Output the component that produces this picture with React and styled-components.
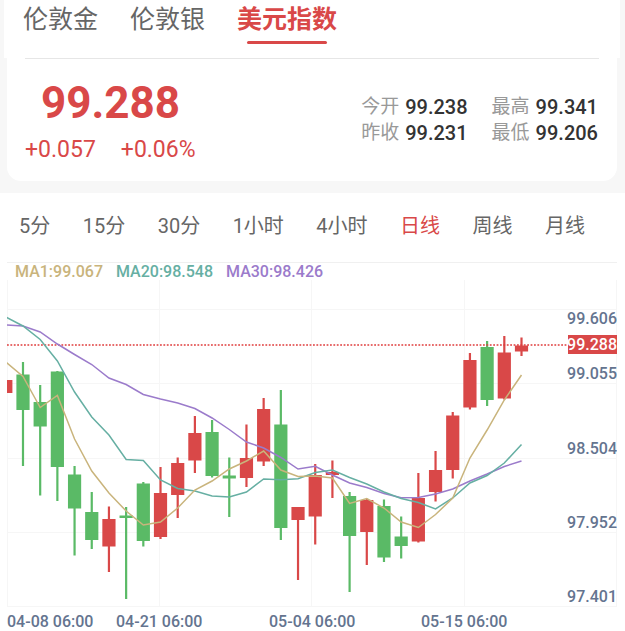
import React, { useState } from "react";

import styled, { createGlobalStyle } from "styled-components";

const symbols = ["伦敦金", "伦敦银", "美元指数"];

const periods = [
  "5分",
  "15分",
  "30分",
  "1小时",
  "4小时",
  "日线",
  "周线",
  "月线",
];

const stats = [
  { name: "今开", value: "99.238" },
  { name: "最高", value: "99.341" },
  { name: "昨收", value: "99.231" },
  { name: "最低", value: "99.206" },
];

const averages = [
  { name: "MA1:99.067", color: "#c9b47c" },
  { name: "MA20:98.548", color: "#66afa3" },
  { name: "MA30:98.426", color: "#9b7bcb" },
];

const UP = "#d94848";
const DOWN = "#5aba66";

// high, body top, body bottom, low, color (chart units)
const candles = [
  [100, 100, 113, 113, UP],
  [82, 94.5, 130, 186, DOWN],
  [105, 122, 146.5, 215.5, DOWN],
  [91, 91.5, 187, 221, DOWN],
  [186, 194.5, 228.5, 275.5, DOWN],
  [212, 232, 260, 269, DOWN],
  [226.5, 239, 266.5, 292, UP],
  [227, 235.5, 238, 319, DOWN],
  [202, 203.5, 261, 266.5, DOWN],
  [187, 213, 257, 259, UP],
  [177.5, 183, 215, 238, UP],
  [136, 153, 180.5, 193, UP],
  [140, 152, 196, 197.5, DOWN],
  [177.5, 195.5, 198.5, 237, DOWN],
  [144.5, 178, 198, 207, UP],
  [118, 129, 181.5, 186, UP],
  [110, 144.5, 248, 260, DOWN],
  [227, 227, 240, 300, UP],
  [184, 195, 236.5, 264.5, UP],
  [180.5, 192, 195, 218, UP],
  [212, 216, 256, 312, DOWN],
  [219, 220, 252, 285, UP],
  [219.5, 226, 277.5, 282, DOWN],
  [236.5, 256.5, 266, 278.5, DOWN],
  [193, 218, 261.5, 262.5, UP],
  [171, 190, 212, 221.5, UP],
  [132, 135.5, 190, 198.5, UP],
  [73, 80, 127.5, 129.5, UP],
  [61, 67, 120, 126, DOWN],
  [56, 72.5, 118.5, 119.5, UP],
  [57.5, 65.5, 71.5, 76, UP],
];

const ma1 = [
  82, 96.5, 127.5, 115.5, 159, 191, 213, 231, 245, 242, 228, 210, 201, 189, 181,
  171, 190, 196.5, 196, 198, 223.5, 218.5, 228, 242, 247.5, 234.5, 218, 178,
  150, 120, 95,
];
const ma20 = [
  37, 46, 59.5, 81, 112, 137, 155, 179.5, 180.5, 200, 208.5, 211, 216, 217, 212,
  199, 199.7, 198.7, 192.5, 190, 197.5, 204, 212, 218.5, 222.5, 229, 218, 203,
  195.5, 183, 164.5,
];
const ma30 = [
  45, 46, 52, 64, 74.5, 84.5, 98, 104.5, 114.5, 119, 123, 128.5, 138, 149.5, 162,
  168, 177.5, 189, 186.3, 195, 203, 207.5, 213.5, 217.7, 217.5, 214, 209, 201,
  194, 186.5, 181,
];

const prices = [
  { label: "99.606", y: 44 },
  { label: "99.055", y: 99 },
  { label: "98.504", y: 174 },
  { label: "97.952", y: 248 },
  { label: "97.401", y: 322 },
];

const dates = [
  { label: "04-08 06:00", x: 0 },
  { label: "04-21 06:00", x: 109 },
  { label: "05-04 06:00", x: 262 },
  { label: "05-15 06:00", x: 414 },
];

const xAt = (i) => 17.19 * i - 1.2;
const toPoints = (values) => values.map((y, i) => `${xAt(i)},${y}`).join(" ");

function Chart() {
  return (
    <ChartSvg viewBox="0 0 610 351" role="img" aria-label="美元指数 日线">
      <defs>
        <clipPath id="plot">
          <rect x="0" y="0" width="610" height="327" />
        </clipPath>
      </defs>

      <g stroke="#f6f6f6" strokeWidth="1">
        {[29.5, 103.5, 178.5, 252.5, 326.5].map((y) => (
          <line key={y} x1="0" x2="610" y1={y} y2={y} />
        ))}
        {[0.5, 152.5, 304.5, 457.5, 609.5].map((x) => (
          <line key={x} x1={x} x2={x} y1="0" y2="327" />
        ))}
      </g>

      <g clipPath="url(#plot)">
        {candles.map(([high, top, bottom, low, color], i) => (
          <g key={i} fill={color}>
            <rect x={xAt(i) - 1.1} y={high} width="2.2" height={low - high} />
            <rect x={xAt(i) - 6.6} y={top} width="13.2" height={bottom - top} />
          </g>
        ))}
      </g>

      <line
        x1="0"
        x2="561"
        y1="65"
        y2="65"
        stroke="#e03c3c"
        strokeWidth="1.7"
        strokeDasharray="1.8 1.6"
      />

      <g clipPath="url(#plot)" fill="none" strokeWidth="1.5">
        <polyline points={toPoints(ma30)} stroke="#9b7bcb" />
        <polyline points={toPoints(ma20)} stroke="#66afa3" />
        <polyline points={toPoints(ma1)} stroke="#c9b47c" />
      </g>

      {prices.map((price) => (
        <AxisText key={price.label} x="610" y={price.y} textAnchor="end">
          {price.label}
        </AxisText>
      ))}
      {dates.map((date) => (
        <AxisText key={date.label} x={date.x} y="347">
          {date.label}
        </AxisText>
      ))}

      <rect x="561" y="55" width="49" height="19" fill={UP} />
      <CurrentText x="610" y="70" textAnchor="end">
        99.288
      </CurrentText>
    </ChartSvg>
  );
}

function App() {
  const [symbol, setSymbol] = useState("美元指数");
  const [period, setPeriod] = useState("日线");

  return (
    <>
      <GlobalStyle />
      <Quote>
        <SymbolTabs>
          {symbols.map((name) => (
            <SymbolTab
              key={name}
              $active={name === symbol}
              onClick={() => setSymbol(name)}
            >
              {name}
            </SymbolTab>
          ))}
        </SymbolTabs>
        <Card>
          <div>
            <Price>99.288</Price>
            <Changes>
              <span>+0.057</span>
              <span>+0.06%</span>
            </Changes>
          </div>
          <Stats>
            {stats.map((stat) => (
              <Stat key={stat.name}>
                <dt>{stat.name}</dt>
                <dd>{stat.value}</dd>
              </Stat>
            ))}
          </Stats>
        </Card>
      </Quote>

      <Periods>
        {periods.map((name) => (
          <Period
            key={name}
            $active={name === period}
            onClick={() => setPeriod(name)}
          >
            {name}
          </Period>
        ))}
      </Periods>

      <ChartPanel>
        <Legend>
          {averages.map((average) => (
            <LegendItem key={average.name} $color={average.color}>
              {average.name}
            </LegendItem>
          ))}
        </Legend>
        <Chart />
      </ChartPanel>
    </>
  );
}

export default App;

const GlobalStyle = createGlobalStyle`
  * {
    box-sizing: border-box;
  }

  body {
    margin: 0;
    background: #fff;
    color: #666;
    font-family: Roboto, "Noto Sans CJK SC", sans-serif;
  }

  button {
    padding: 0;
    border: 0;
    background: none;
    font-family: inherit;
    cursor: pointer;
  }
`;

const Quote = styled.header`
  padding: 0 5px 12px 4px;
  background: #f7f7f7;
`;

const SymbolTabs = styled.nav`
  display: flex;
  align-items: flex-start;
  gap: 32px;
  height: 58px;
  padding: 0 19px;
  background: #fff;
`;

const SymbolTab = styled.button`
  position: relative;
  height: 44px;
  padding-bottom: 4px;
  font-size: 25px;
  line-height: 40px;
  font-weight: ${(props) => (props.$active ? 700 : 400)};
  color: ${(props) => (props.$active ? "#d94848" : "#666")};

  &::after {
    content: "";
    display: ${(props) => (props.$active ? "block" : "none")};
    position: absolute;
    right: 10px;
    bottom: 0;
    left: 10px;
    height: 3px;
    border-radius: 2px;
    background: #d94848;
  }
`;

const Card = styled.section`
  position: relative;
  display: flex;
  justify-content: space-between;
  align-items: flex-start;
  height: 123px;
  margin: 0 3px;
  padding: 0 19px 0 18px;
  border-radius: 0 0 14px 14px;
  background: #fff;

  &::before {
    content: "";
    position: absolute;
    top: 0;
    right: 18px;
    left: 18px;
    height: 1px;
    background: #e6e6e6;
  }
`;

const Price = styled.div`
  padding: 20px 0 0 16px;
  color: #d94848;
  font-size: 44px;
  font-weight: 700;
  line-height: 50px;
`;

const Changes = styled.div`
  display: flex;
  gap: 25px;
  padding-top: 8px;
  color: #d94848;
  font-size: 23px;
  font-weight: 400;
  line-height: 28px;
`;

const Stats = styled.dl`
  display: grid;
  grid-template-columns: auto auto;
  column-gap: 24px;
  margin: 36px 0 0;
`;

const Stat = styled.div`
  display: flex;
  align-items: center;
  gap: 6px;
  line-height: 26px;

  dt {
    color: #999;
    font-size: 19px;
    font-weight: 400;
  }

  dd {
    margin: 0;
    color: #333;
    font-size: 20px;
    font-weight: 500;
  }
`;

const Periods = styled.nav`
  display: flex;
  justify-content: space-between;
  height: 69px;
  padding: 0 40px 3px 19px;
`;

const Period = styled.button`
  font-size: 20px;
  line-height: 30px;
  color: ${(props) => (props.$active ? "#d94848" : "#666")};
`;

const ChartPanel = styled.section`
  margin: 0 8px 0 7px;
  border-top: 1px solid #f0f0f0;
`;

const Legend = styled.div`
  display: flex;
  gap: 13px;
  padding-left: 8px;
  font-size: 16px;
  font-weight: 500;
  line-height: 17px;
`;

const LegendItem = styled.span`
  color: ${(props) => props.$color};
`;

const ChartSvg = styled.svg`
  display: block;
  width: 100%;
  height: auto;
`;

const AxisText = styled.text`
  fill: #64748f;
  font-size: 16px;
  font-weight: 500;
`;

const CurrentText = styled(AxisText)`
  fill: #fff;
`;
